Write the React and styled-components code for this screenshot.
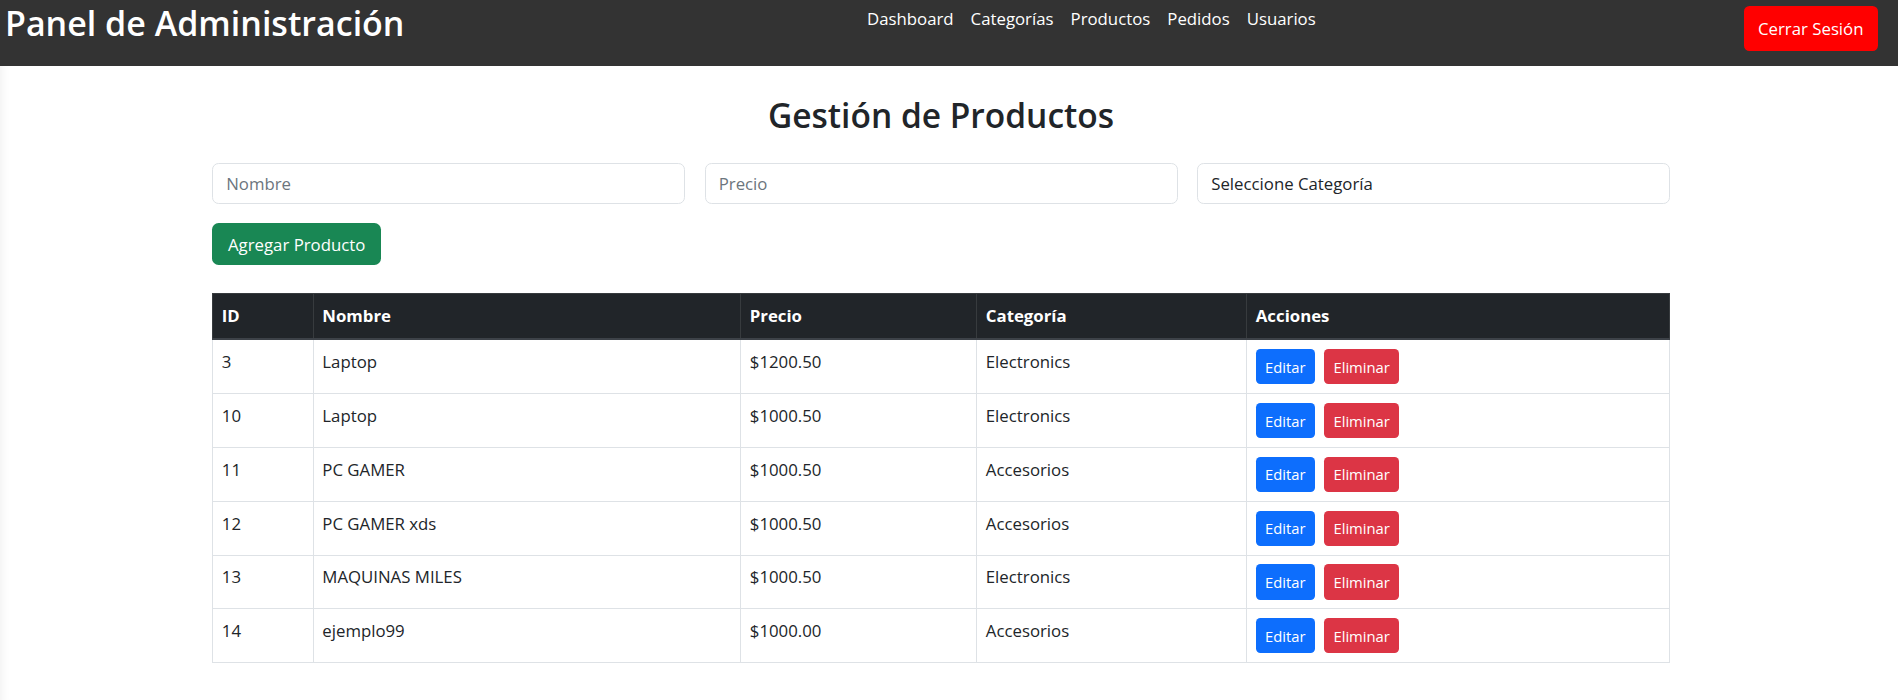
import React from "react";
import styled, { createGlobalStyle } from "styled-components";

const GlobalStyle = createGlobalStyle`
  html, body { margin: 0; padding: 0; background: #ffffff; }
  body {
    font-family: "Open Sans", "Noto Sans", sans-serif;
    color: #212529;
    font-size: 16.8px;
    line-height: 26.4px;
  }
  * { box-sizing: border-box; }
`;

const Header = styled.header`
  display: grid;
  grid-template-columns: 862px auto 1fr;
  align-items: start;
  height: 66px;
  padding: 0 20px 0 5px;
  background: #333333;
`;

const Brand = styled.h1`
  margin: 3px 0 0;
  font-size: 34px;
  line-height: 1.2;
  font-weight: 600;
  color: #ffffff;
  white-space: nowrap;
`;

const Nav = styled.nav`
  display: flex;
  gap: 17px;
  margin-top: 6px;
`;

const NavLink = styled.a`
  color: #ffffff;
  text-decoration: none;
  font-size: 16.8px;
  line-height: 26.4px;
  white-space: nowrap;
`;

const LogoutButton = styled.button`
  justify-self: end;
  margin-top: 6px;
  height: 45px;
  padding: 0 14.5px;
  border: none;
  border-radius: 5.5px;
  background: #ff0000;
  color: #ffffff;
  font-family: inherit;
  font-size: 16.8px;
  cursor: pointer;
`;

const Main = styled.main`
  padding: 0 228px 40px 212px;
  min-height: 634px;
  box-shadow: inset 10px 0 12px -10px rgba(0, 0, 0, 0.08);
`;

const Title = styled.h2`
  margin: 0;
  padding: 28.8px 0 28px;
  text-align: center;
  font-size: 33.5px;
  line-height: 1.2;
  font-weight: 600;
  color: #212529;
`;

const FormRow = styled.div`
  display: grid;
  grid-template-columns: repeat(3, 1fr);
  gap: 19.5px;
`;

const Field = styled.input`
  width: 100%;
  height: 41.5px;
  padding: 6.6px 13.2px;
  border: 1.1px solid #dee2e6;
  border-radius: 6.6px;
  background: #ffffff;
  font-family: inherit;
  font-size: 16.8px;
  color: #212529;
  outline: none;
  &::placeholder { color: #6c757d; }
`;

const SelectField = styled.select`
  width: 100%;
  height: 41.5px;
  padding: 6.6px 13.2px;
  border: 1.1px solid #dee2e6;
  border-radius: 6.6px;
  background: #ffffff;
  font-family: inherit;
  font-size: 16.8px;
  color: #212529;
  appearance: none;
  -webkit-appearance: none;
  outline: none;
`;

const AddButton = styled.button`
  display: block;
  margin-top: 18.5px;
  height: 42.5px;
  padding: 0 16px;
  border: none;
  border-radius: 6.6px;
  background: #198754;
  color: #ffffff;
  font-family: inherit;
  font-size: 16.8px;
  cursor: pointer;
`;

const Table = styled.table`
  width: 100%;
  margin-top: 28px;
  border-collapse: collapse;
  table-layout: fixed;
  border: 1px solid #dee2e6;
`;

const Col = styled.col`
  width: ${(p) => p.$w || "auto"};
`;

const HeadCell = styled.th`
  padding: 8.8px;
  text-align: left;
  vertical-align: top;
  font-weight: 700;
  font-size: 16.8px;
  line-height: 26.4px;
  color: #ffffff;
  background: #212529;
  border: 1px solid #373b3e;
  border-bottom: 2px solid #3d4248;
`;

const Cell = styled.td`
  padding: 8.8px;
  vertical-align: top;
  font-size: 16.8px;
  line-height: 26.4px;
  color: #212529;
  border: 1px solid #dee2e6;
  white-space: nowrap;
`;

const Actions = styled.div`
  display: flex;
  gap: 9.5px;
`;

const SmallButton = styled.button`
  height: 35.2px;
  padding: 0 9.2px;
  border: none;
  border-radius: 4.4px;
  background: ${(p) => (p.$variant === "danger" ? "#dc3545" : "#0d6efd")};
  color: #ffffff;
  font-family: inherit;
  font-size: 14.8px;
  cursor: pointer;
`;

const products = [
  { id: 3, name: "Laptop", price: "$1200.50", cat: "Electronics" },
  { id: 10, name: "Laptop", price: "$1000.50", cat: "Electronics" },
  { id: 11, name: "PC GAMER", price: "$1000.50", cat: "Accesorios" },
  { id: 12, name: "PC GAMER xds", price: "$1000.50", cat: "Accesorios" },
  { id: 13, name: "MAQUINAS MILES", price: "$1000.50", cat: "Electronics" },
  { id: 14, name: "ejemplo99", price: "$1000.00", cat: "Accesorios" },
];

export default function App() {
  return (
    <>
      <GlobalStyle />
      <Header>
        <Brand>Panel de Administración</Brand>
        <Nav>
          <NavLink href="#">Dashboard</NavLink>
          <NavLink href="#">Categorías</NavLink>
          <NavLink href="#">Productos</NavLink>
          <NavLink href="#">Pedidos</NavLink>
          <NavLink href="#">Usuarios</NavLink>
        </Nav>
        <LogoutButton>Cerrar Sesión</LogoutButton>
      </Header>
      <Main>
        <Title>Gestión de Productos</Title>
        <FormRow>
          <Field placeholder="Nombre" />
          <Field placeholder="Precio" />
          <SelectField defaultValue="">
            <option value="">Seleccione Categoría</option>
            <option value="1">Electronics</option>
            <option value="2">Accesorios</option>
          </SelectField>
        </FormRow>
        <AddButton>Agregar Producto</AddButton>
        <Table>
          <colgroup>
            <Col $w="100.5px" />
            <Col $w="427.5px" />
            <Col $w="236px" />
            <Col $w="270px" />
            <Col />
          </colgroup>
          <thead>
            <tr>
              <HeadCell>ID</HeadCell>
              <HeadCell>Nombre</HeadCell>
              <HeadCell>Precio</HeadCell>
              <HeadCell>Categoría</HeadCell>
              <HeadCell>Acciones</HeadCell>
            </tr>
          </thead>
          <tbody>
            {products.map((p) => (
              <tr key={p.id}>
                <Cell>{p.id}</Cell>
                <Cell>{p.name}</Cell>
                <Cell>{p.price}</Cell>
                <Cell>{p.cat}</Cell>
                <Cell>
                  <Actions>
                    <SmallButton>Editar</SmallButton>
                    <SmallButton $variant="danger">Eliminar</SmallButton>
                  </Actions>
                </Cell>
              </tr>
            ))}
          </tbody>
        </Table>
      </Main>
    </>
  );
}
